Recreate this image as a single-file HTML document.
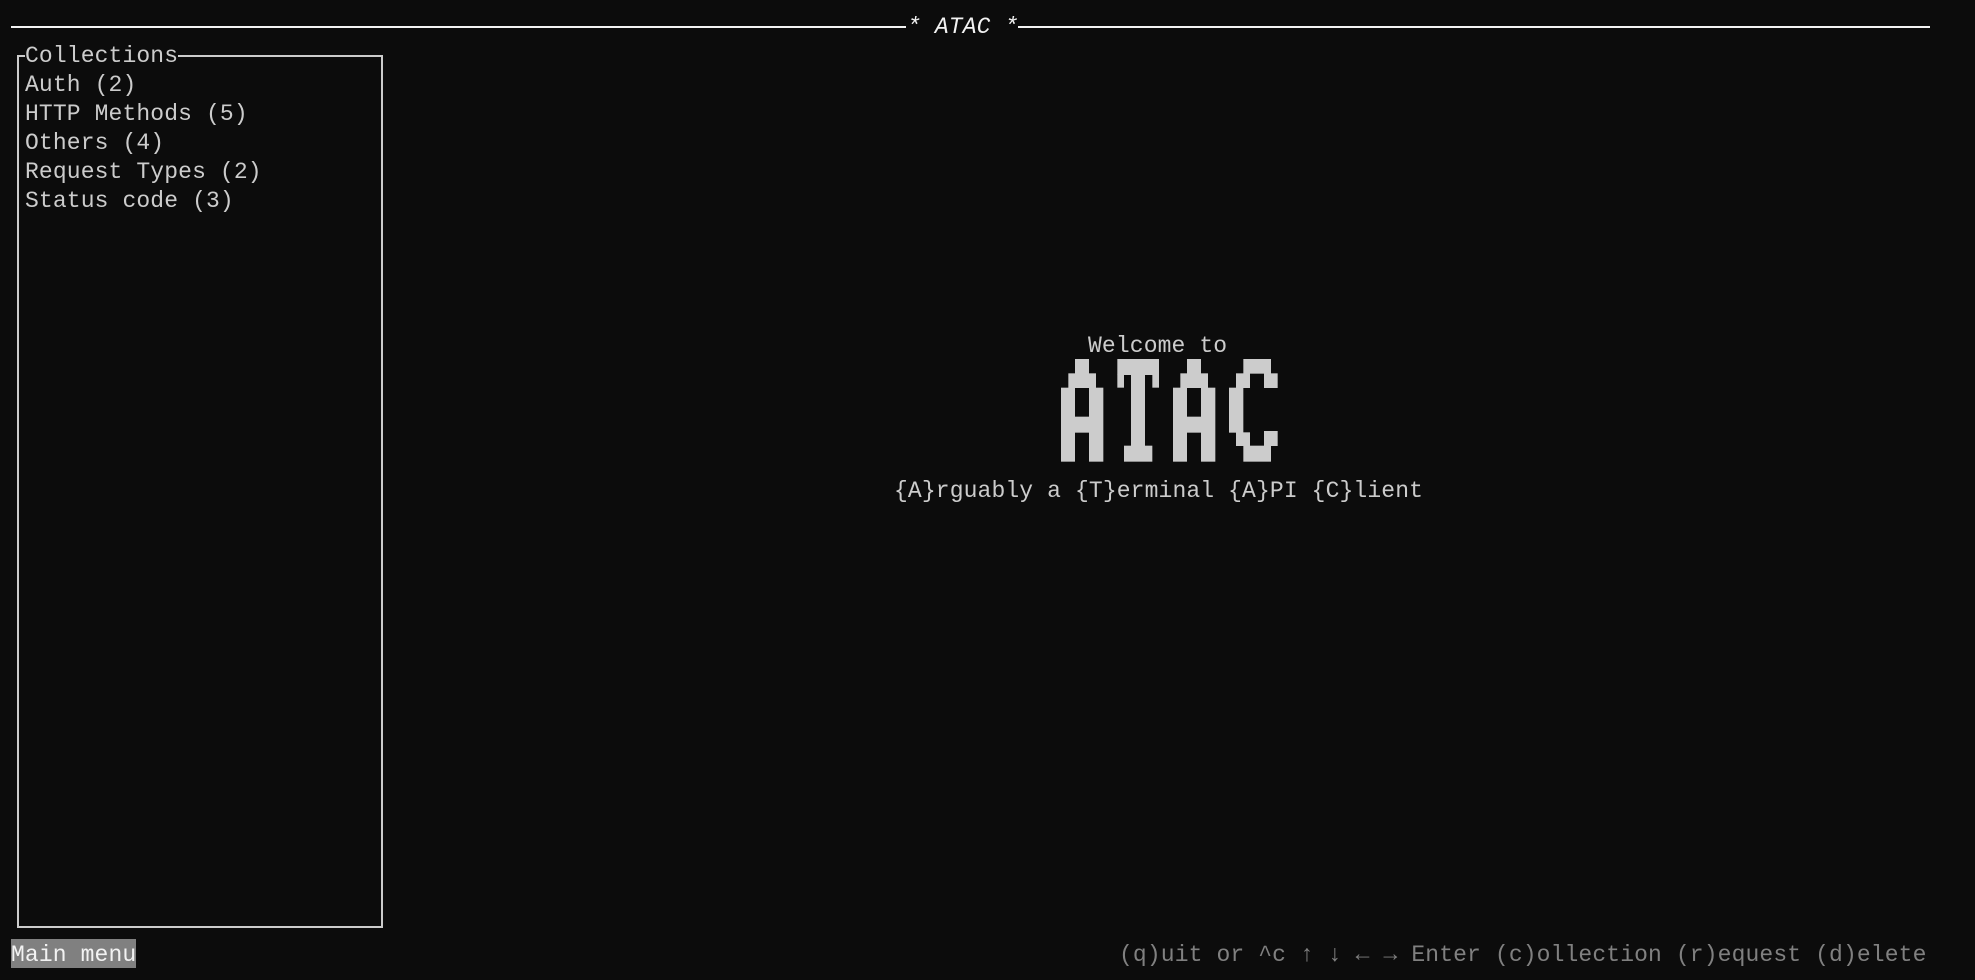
<!DOCTYPE html>
<html><head><meta charset="utf-8"><style>
html,body{margin:0;padding:0;background:#0c0c0c;width:1975px;height:980px;overflow:hidden;position:relative;font-family:"Liberation Mono","DejaVu Sans Mono",monospace;font-size:23px;color:#cccccc;letter-spacing:0.12px}
.t{position:absolute;white-space:pre;line-height:29px;height:29px;margin-top:2px}
.ln{position:absolute;background:#f2f2f2;height:2px}
</style></head><body>
<div class="ln" style="left:11px;top:26px;width:895px"></div>
<div class="ln" style="left:1018px;top:26px;width:912px"></div>
<div class="t" style="left:907px;top:11px;color:#f2f2f2;font-style:italic">* ATAC *</div>

<div style="position:absolute;left:17px;top:55px;width:362px;height:869px;border:2px solid #cccccc"></div>
<div class="t" style="left:25px;top:40px;background:#0c0c0c">Collections</div>
<div class="t" style="left:25px;top:69px">Auth (2)</div>
<div class="t" style="left:25px;top:98px">HTTP Methods (5)</div>
<div class="t" style="left:25px;top:127px">Others (4)</div>
<div class="t" style="left:25px;top:156px">Request Types (2)</div>
<div class="t" style="left:25px;top:185px">Status code (3)</div>

<div class="t" style="left:1088px;top:330px">Welcome to</div>
<svg style="position:absolute;left:1055px;top:355px" width="230" height="110" viewBox="0 0 690 330" fill="#cccccc">
<g><rect x="60" y="12" width="42" height="44"/><rect x="40" y="55" width="83" height="44"/><rect x="18" y="98" width="42" height="222"/><rect x="102" y="98" width="43" height="222"/><rect x="59" y="185" width="44" height="48"/></g>
<g transform="translate(336,0)"><rect x="60" y="12" width="42" height="44"/><rect x="40" y="55" width="83" height="44"/><rect x="18" y="98" width="42" height="222"/><rect x="102" y="98" width="43" height="222"/><rect x="59" y="185" width="44" height="48"/></g>
<rect x="187" y="12" width="125" height="48"/><rect x="187" y="59" width="20" height="39"/><rect x="292" y="59" width="20" height="39"/><rect x="228" y="59" width="42" height="214"/><rect x="207" y="272" width="85" height="48"/>
<rect x="565" y="12" width="83" height="44"/><rect x="627" y="55" width="41" height="44"/><rect x="543" y="55" width="42" height="44"/><rect x="522" y="98" width="43" height="135"/><rect x="543" y="232" width="42" height="41"/><rect x="565" y="272" width="83" height="48"/><rect x="627" y="228" width="41" height="45"/>
</svg>
<div class="t" style="left:894px;top:475px">{A}rguably a {T}erminal {A}PI {C}lient</div>

<div class="t" style="left:11px;top:939px;margin-top:0;padding-top:2px;height:27px;background:#808080;color:#f2f2f2">Main menu</div>
<div class="t" style="left:1119px;top:939px;color:#808080">(q)uit or ^c ↑ ↓ ← → Enter (c)ollection (r)equest (d)elete</div>
</body></html>
